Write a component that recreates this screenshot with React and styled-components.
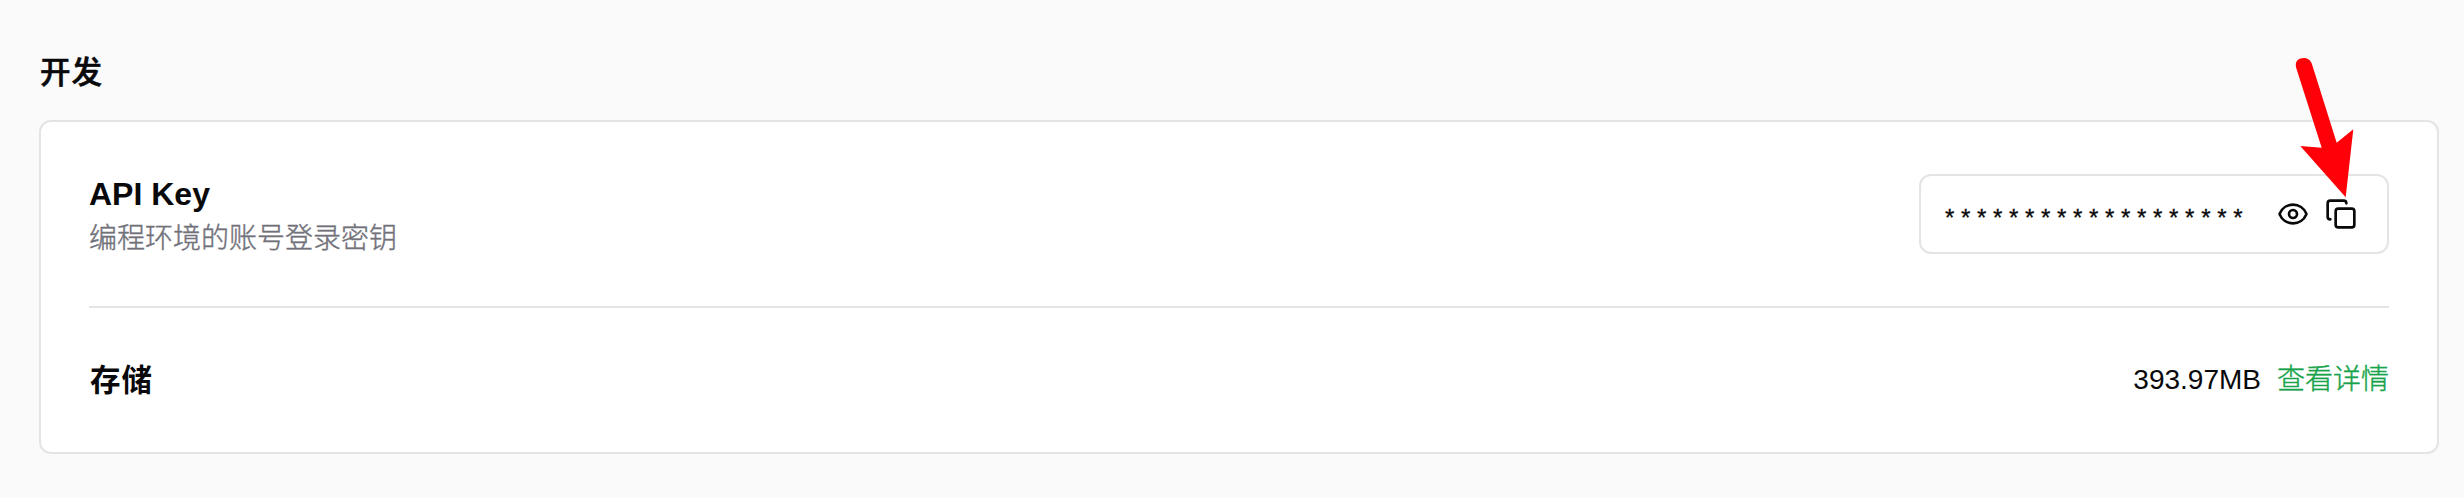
import React from 'react';
import styled, { createGlobalStyle } from 'styled-components';
import { Eye, Copy } from 'lucide-react';

const GlobalStyle = createGlobalStyle`
  * { box-sizing: border-box; }
  body {
    margin: 0;
    background: #fafafa;
    color: #09090b;
    font-family: "Liberation Sans", "Noto Sans CJK SC", sans-serif;
  }
`;

const Page = styled.main`
  position: relative;
  height: 498px;
  padding: 48px 25px 44px 39px;
  display: flex;
  flex-direction: column;
`;

const SectionTitle = styled.h2`
  margin: 0 0 24px;
  padding-left: 1px;
  height: 48px;
  line-height: 48px;
  font-size: 30.5px;
  letter-spacing: 1px;
  font-weight: 500;
  -webkit-text-stroke: 0.6px currentColor;
`;

const Card = styled.section`
  height: 334px;
  padding: 0 48px;
  background: #fff;
  border: 2px solid #e4e4e4;
  border-radius: 12px;
`;

const Row = styled.div`
  display: flex;
  align-items: center;
  justify-content: space-between;
  height: ${(p) => p.$height}px;
  border-bottom: ${(p) => (p.$divided ? '2px solid #e4e4e4' : 'none')};
`;

const RowTitle = styled.h3`
  margin: 0;
  padding-left: ${(p) => (p.$cjk ? 1 : 0)}px;
  font-size: ${(p) => (p.$cjk ? 30.5 : 32)}px;
  letter-spacing: ${(p) => (p.$cjk ? 1 : 0)}px;
  line-height: 44px;
  font-weight: 700;
`;

const Description = styled.p`
  margin: 3px 0 -3px;
  font-size: 28px;
  line-height: 40px;
  font-weight: 300;
  -webkit-text-stroke: 0.4px currentColor;
  color: #71717a;
`;

const KeyBox = styled.div`
  display: flex;
  align-items: center;
  justify-content: space-between;
  width: 470px;
  height: 80px;
  padding: 0 30px 0 24px;
  border: 2px solid #e4e4e4;
  border-radius: 12px;
`;

const Secret = styled.span`
  padding-top: 8px;
  font-size: 24px;
  line-height: 32px;
  white-space: nowrap;
  -webkit-text-stroke: 0.3px currentColor;
`;

const Actions = styled.div`
  display: flex;
  gap: 16px;
`;

const IconButton = styled.button`
  display: flex;
  padding: 0;
  border: 0;
  background: none;
  color: inherit;
`;

const Usage = styled.div`
  display: flex;
  gap: 16px;
  font-size: 28px;
  line-height: 40px;
`;

const DetailLink = styled.a`
  color: #16a34a;
  font-weight: 300;
  -webkit-text-stroke: 0.4px currentColor;
`;

const Pointer = styled.svg`
  position: absolute;
  left: 2290px;
  top: 50px;
  pointer-events: none;
`;

export default function App() {
  return (
    <>
      <GlobalStyle />
      <Page>
        <SectionTitle>开发</SectionTitle>
        <Card>
          <Row $height={186} $divided>
            <div>
              <RowTitle>API Key</RowTitle>
              <Description>编程环境的账号登录密钥</Description>
            </div>
            <KeyBox>
              <Secret>{Array(19).fill('*').join(' ')}</Secret>
              <Actions>
                <IconButton aria-label="显示"><Eye size={32} /></IconButton>
                <IconButton aria-label="复制"><Copy size={32} /></IconButton>
              </Actions>
            </KeyBox>
          </Row>
          <Row $height={144}>
            <RowTitle $cjk>存储</RowTitle>
            <Usage>
              <span>393.97MB</span>
              <DetailLink>查看详情</DetailLink>
            </Usage>
          </Row>
        </Card>
        <Pointer width="70" height="150" viewBox="0 0 70 150">
          <path
            fill="#ff0008"
            d="M6.3 18.3C4.2 10.8 9 8 14 8C18 8 20.8 10.4 22 14.2L46.7 92.7L63.3 79.3L55.7 147.3L10.3 96L31.7 97.7Z"
          />
        </Pointer>
      </Page>
    </>
  );
}
